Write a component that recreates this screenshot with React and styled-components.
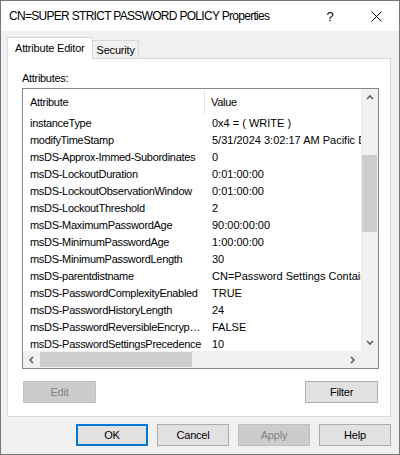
import React from 'react';
import styled, { createGlobalStyle } from 'styled-components';

const GlobalStyle = createGlobalStyle`
  html, body {
    margin: 0;
    padding: 0;
    background: #f0f0f0;
  }
  * {
    box-sizing: border-box;
  }
`;

const Window = styled.div`
  width: 400px;
  height: 455px;
  border: 1px solid #777777;
  background: #f0f0f0;
  display: flex;
  flex-direction: column;
  font-family: "Liberation Sans", Arial, sans-serif;
  font-size: 11px;
  letter-spacing: -0.3px;
  color: #000;
`;

const TitleBar = styled.div`
  height: 30px;
  flex: none;
  background: #fff;
  display: flex;
  align-items: center;
`;

const Title = styled.div`
  padding-left: 8px;
  font-size: 12px;
  letter-spacing: -0.7px;
`;

const CaptionButtons = styled.div`
  margin-left: auto;
  display: flex;
`;

const CaptionButton = styled.div`
  width: 46px;
  height: 30px;
  display: flex;
  align-items: center;
  justify-content: center;
  font-size: 13px;
  letter-spacing: 0;
`;

const Body = styled.div`
  flex: 1;
  display: flex;
  flex-direction: column;
  padding: 6px 8px 0 6px;
`;

const TabStrip = styled.div`
  height: 21px;
  display: flex;
  align-items: flex-end;
`;

const Tab = styled.div`
  height: ${(p) => (p.$active ? '22px' : '18px')};
  margin-bottom: ${(p) => (p.$active ? '-1px' : '0')};
  padding: ${(p) => (p.$active ? '2px 7px 0 7px' : '1px 3px 0 4px')};
  background: ${(p) => (p.$active ? '#fff' : '#f0f0f0')};
  border: 1px solid #d9d9d9;
  border-bottom: none;
  border-left: ${(p) => (p.$active ? '1px solid #d9d9d9' : 'none')};
  position: relative;
  z-index: ${(p) => (p.$active ? 1 : 0)};
  letter-spacing: -0.2px;
  line-height: 16px;
`;

const Panel = styled.div`
  height: 359px;
  flex: none;
  background: #fff;
  border: 1px solid #d9d9d9;
  padding: 13px 11px 13px 14px;
  display: flex;
  flex-direction: column;
`;

const Label = styled.div`
  line-height: 13px;
  margin-bottom: 3px;
`;

const ListBox = styled.div`
  height: 281px;
  border: 1px solid #828790;
  display: grid;
  grid-template-columns: 1fr 17px;
  grid-template-rows: 1fr 17px;
`;

const ListContent = styled.div`
  overflow: hidden;
  background: #fff;
`;

const HeaderRow = styled.div`
  height: 26px;
  display: flex;
  align-items: center;
  white-space: nowrap;
`;

const HeaderCell = styled.div`
  width: ${(p) => p.$width || 'auto'};
  flex: none;
  height: 24px;
  display: flex;
  align-items: center;
  padding-left: ${(p) => p.$pad}px;
  border-right: ${(p) => (p.$divider ? '1px solid #e5e5e5' : 'none')};
`;

const Row = styled.div`
  height: 17px;
  line-height: 17px;
  display: flex;
  white-space: nowrap;
`;

const NameCell = styled.div`
  width: 182px;
  flex: none;
  padding: 0 2px 0 7px;
  overflow: hidden;
  text-overflow: ellipsis;
`;

const ValueCell = styled.div`
  flex: none;
  padding-left: 7px;
  letter-spacing: 0;
`;

const VScroll = styled.div`
  background: #f0f0f0;
  display: flex;
  flex-direction: column;
`;

const HScroll = styled.div`
  background: #f0f0f0;
  display: flex;
`;

const Corner = styled.div`
  background: #f0f0f0;
`;

const Arrow = styled.div`
  width: 17px;
  height: 17px;
  flex: none;
  display: flex;
  align-items: center;
  justify-content: center;
`;

const VTrack = styled.div`
  flex: 1;
  padding-top: 49px;
`;

const VThumb = styled.div`
  height: 77px;
  margin: 0 1px;
  background: #cdcdcd;
`;

const HTrack = styled.div`
  flex: 1;
  display: flex;
  align-items: stretch;
  padding: 1px 0;
`;

const HThumb = styled.div`
  width: 152px;
  background: #cdcdcd;
`;

const ButtonRow = styled.div`
  margin-top: 12px;
  padding: 0 1px;
  display: flex;
  justify-content: space-between;
`;

const Button = styled.button`
  width: ${(p) => p.$width || 73}px;
  height: 22px;
  padding: 0;
  font-family: "Liberation Sans", Arial, sans-serif;
  font-size: 11px;
  letter-spacing: -0.2px;
  color: ${(p) => (p.disabled ? '#838383' : '#000')};
  background: ${(p) => (p.disabled ? '#cccccc' : '#e1e1e1')};
  border: ${(p) => (p.$default ? '2px solid #0078d7' : p.disabled ? '1px solid #bfbfbf' : '1px solid #adadad')};
`;

const Footer = styled.div`
  margin-top: 7px;
  display: flex;
  justify-content: flex-end;
  gap: 9px;
`;

const Chevron = ({ dir }) => {
  const pts = {
    up: '1,5 4,2 7,5',
    down: '1,2 4,5 7,2',
    left: '5,1 2,4 5,7',
    right: '2,1 5,4 2,7',
  }[dir];
  const w = dir === 'up' || dir === 'down' ? 8 : 7;
  const h = dir === 'up' || dir === 'down' ? 7 : 8;
  return (
    <svg width={w} height={h} viewBox={`0 0 ${w} ${h}`}>
      <polyline points={pts} fill="none" stroke="#606060" strokeWidth="1.6" />
    </svg>
  );
};

const rows = [
  ['instanceType', '0x4 = ( WRITE )'],
  ['modifyTimeStamp', '5/31/2024 3:02:17 AM Pacific Daylight Time'],
  ['msDS-Approx-Immed-Subordinates', '0'],
  ['msDS-LockoutDuration', '0:01:00:00'],
  ['msDS-LockoutObservationWindow', '0:01:00:00'],
  ['msDS-LockoutThreshold', '2'],
  ['msDS-MaximumPasswordAge', '90:00:00:00'],
  ['msDS-MinimumPasswordAge', '1:00:00:00'],
  ['msDS-MinimumPasswordLength', '30'],
  ['msDS-parentdistname', 'CN=Password Settings Container,CN=System,DC=corp,DC=local'],
  ['msDS-PasswordComplexityEnabled', 'TRUE'],
  ['msDS-PasswordHistoryLength', '24'],
  ['msDS-PasswordReversibleEncryptionEnabled', 'FALSE'],
  ['msDS-PasswordSettingsPrecedence', '10'],
];

export default function App() {
  return (
    <>
      <GlobalStyle />
      <Window>
        <TitleBar>
          <Title>CN=SUPER STRICT PASSWORD POLICY Properties</Title>
          <CaptionButtons>
            <CaptionButton>?</CaptionButton>
            <CaptionButton>
              <svg width="11" height="11" viewBox="0 0 11 11">
                <path d="M0.5 0.5 L10.5 10.5 M10.5 0.5 L0.5 10.5" stroke="#000" strokeWidth="1" />
              </svg>
            </CaptionButton>
          </CaptionButtons>
        </TitleBar>
        <Body>
          <TabStrip>
            <Tab $active>Attribute Editor</Tab>
            <Tab>Security</Tab>
          </TabStrip>
          <Panel>
            <Label>Attributes:</Label>
            <ListBox>
              <ListContent>
                <HeaderRow>
                  <HeaderCell $width="182px" $pad={7} $divider>Attribute</HeaderCell>
                  <HeaderCell $pad={6}>Value</HeaderCell>
                </HeaderRow>
                {rows.map(([name, value]) => (
                  <Row key={name}>
                    <NameCell>{name}</NameCell>
                    <ValueCell>{value}</ValueCell>
                  </Row>
                ))}
              </ListContent>
              <VScroll>
                <Arrow><Chevron dir="up" /></Arrow>
                <VTrack><VThumb /></VTrack>
                <Arrow><Chevron dir="down" /></Arrow>
              </VScroll>
              <HScroll>
                <Arrow><Chevron dir="left" /></Arrow>
                <HTrack><HThumb /></HTrack>
                <Arrow><Chevron dir="right" /></Arrow>
              </HScroll>
              <Corner />
            </ListBox>
            <ButtonRow>
              <Button disabled>Edit</Button>
              <Button>Filter</Button>
            </ButtonRow>
          </Panel>
          <Footer>
            <Button $width={72} $default>OK</Button>
            <Button $width={72}>Cancel</Button>
            <Button $width={72} disabled>Apply</Button>
            <Button $width={72}>Help</Button>
          </Footer>
        </Body>
      </Window>
    </>
  );
}
